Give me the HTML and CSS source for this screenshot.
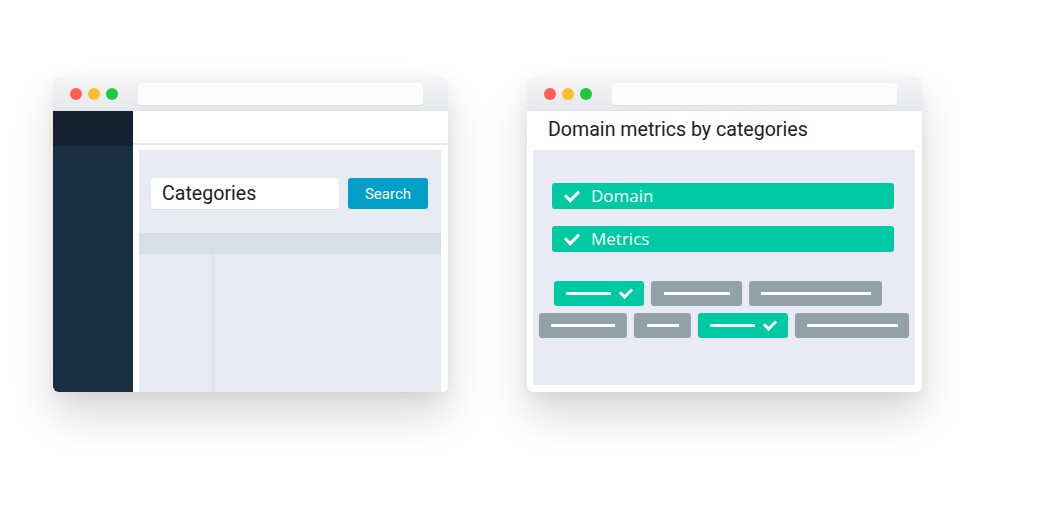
FILE: index.html
```html
<!DOCTYPE html>
<html lang="en">
<head>
    <meta charset="UTF-8">
    <meta name="viewport" content="width=device-width, initial-scale=1.0">
    <title>Categories</title>
    <link rel="stylesheet" href="styles.css">
</head>
<body>
    <div class="stage">
        <!-- Left window: search app -->
        <div class="window">
            <div class="titlebar">
                <div class="dots"><span class="dot red"></span><span class="dot yellow"></span><span class="dot green"></span></div>
                <div class="address"></div>
            </div>
            <div class="app">
                <div class="sidebar">
                    <div class="sidebar-top"></div>
                </div>
                <div class="main">
                    <div class="topbar"></div>
                    <div class="panel">
                        <div class="search-row">
                            <div class="search-input">Categories</div>
                            <button class="search-btn">Search</button>
                        </div>
                        <div class="table-head"></div>
                        <div class="table-body">
                            <div class="table-col"></div>
                        </div>
                    </div>
                </div>
            </div>
        </div>

        <!-- Right window: metrics -->
        <div class="window">
            <div class="titlebar">
                <div class="dots"><span class="dot red"></span><span class="dot yellow"></span><span class="dot green"></span></div>
                <div class="address"></div>
            </div>
            <div class="metrics">
                <h2 class="metrics-title">Domain metrics by categories</h2>
                <div class="metrics-panel">
                    <div class="pill"><span class="check"></span>Domain</div>
                    <div class="pill"><span class="check"></span>Metrics</div>
                    <div class="chips row-one">
                        <div class="chip on" style="width:90px"><span class="bar" style="width:45px"></span><span class="check small"></span></div>
                        <div class="chip" style="width:91px"><span class="bar" style="width:66px"></span></div>
                        <div class="chip" style="width:133px"><span class="bar" style="width:110px"></span></div>
                    </div>
                    <div class="chips row-two">
                        <div class="chip" style="width:88px"><span class="bar" style="width:64px"></span></div>
                        <div class="chip" style="width:57px"><span class="bar" style="width:32px"></span></div>
                        <div class="chip on" style="width:90px"><span class="bar" style="width:45px"></span><span class="check small"></span></div>
                        <div class="chip" style="width:114px"><span class="bar" style="width:91px"></span></div>
                    </div>
                </div>
            </div>
        </div>
    </div>
</body>
</html>
```

FILE: styles.css
```css
html, body {
    height: 100%;
}
body {
    margin: 0;
    background-color: #ffffff;
    font-family: Roboto, "Liberation Sans", sans-serif;
}
.stage {
    display: flex;
    align-items: flex-start;
    gap: 79px;
    min-height: 100%;
    box-sizing: border-box;
    padding: 77px 0 0 53px;
}
.window {
    width: 395px;
    height: 315px;
    flex: none;
    display: flex;
    flex-direction: column;
    background-color: #ffffff;
    border-radius: 6px;
    overflow: hidden;
    box-shadow: 0 24px 44px rgba(0, 0, 0, 0.15), 0 4px 14px rgba(0, 0, 0, 0.06);
}
.titlebar {
    height: 34px;
    flex: none;
    display: flex;
    align-items: center;
    background: linear-gradient(#f4f4f6, #e7e8eb);
    border-bottom: 1px solid #dfe1e6;
    box-sizing: border-box;
}
.dots {
    display: flex;
    gap: 6px;
    padding-left: 17px;
    width: 85px;
    box-sizing: border-box;
}
.dot {
    width: 12px;
    height: 12px;
    border-radius: 50%;
}
.dot.red { background-color: #ff5f57; }
.dot.yellow { background-color: #ffbd2e; }
.dot.green { background-color: #1ec83f; }
.address {
    width: 285px;
    height: 22px;
    background-color: #fcfcfd;
    border-radius: 3px;
    box-shadow: 0 1px 1px rgba(0, 0, 0, 0.05);
}

/* left app */
.app {
    flex: 1;
    display: flex;
}
.sidebar {
    width: 80px;
    background-color: #1b2d42;
}
.sidebar-top {
    height: 35px;
    background-color: #14202e;
}
.main {
    flex: 1;
    display: flex;
    flex-direction: column;
}
.topbar {
    height: 32px;
    border-bottom: 2px solid #e4e6ea;
}
.panel {
    flex: 1;
    margin: 5px 7px 0 6px;
    background-color: #e8ebf3;
    display: flex;
    flex-direction: column;
}
.search-row {
    display: flex;
    gap: 9px;
    padding: 28px 0 0 12px;
    height: 31px;
}
.search-input {
    width: 188px;
    height: 31px;
    box-sizing: border-box;
    background-color: #ffffff;
    border-radius: 3px;
    box-shadow: 0 1px 1px rgba(0, 0, 0, 0.08);
    padding-left: 11px;
    font-size: 19.6px;
    line-height: 31px;
    color: #222222;
}
.search-btn {
    width: 80px;
    height: 31px;
    border: none;
    border-radius: 3px;
    background-color: #00a0c9;
    color: #ffffff;
    font-family: Roboto, "Liberation Sans", sans-serif;
    font-size: 15px;
    padding: 0;
}
.table-head {
    height: 21px;
    margin-top: 24px;
    background-color: #d9dde5;
}
.table-body {
    flex: 1;
    display: flex;
}
.table-col {
    width: 73px;
    border-right: 2px solid #dcdfe4;
}

/* right window */
.metrics {
    flex: 1;
    display: flex;
    flex-direction: column;
}
.metrics-title {
    margin: 0;
    height: 39px;
    padding-left: 21px;
    font-weight: 400;
    font-size: 19.6px;
    line-height: 37px;
    color: #222222;
}
.metrics-panel {
    flex: none;
    height: 235px;
    margin: 0 7px 0 6px;
    background-color: #e8ebf3;
    padding-top: 33px;
    box-sizing: border-box;
}
.pill {
    margin: 0 21px 17px 19px;
    height: 26px;
    border-radius: 3px;
    background-color: #00caa3;
    color: #ffffff;
    font-family: "Open Sans", sans-serif;
    font-size: 17px;
    line-height: 26px;
    display: flex;
    align-items: center;
}
.check {
    width: 11px;
    height: 6px;
    border-left: 3px solid #ffffff;
    border-bottom: 3px solid #ffffff;
    transform: rotate(-45deg);
    margin: -4px 12px 0 13px;
}
.check.small {
    width: 9px;
    height: 5px;
    margin: -4px 0 0 9px;
}
.chips {
    display: flex;
    gap: 7px;
}
.row-one {
    margin: 29px 0 0 21px;
}
.row-two {
    margin: 7px 0 0 6px;
}
.chip {
    height: 25px;
    border-radius: 3px;
    background-color: #93a1a8;
    display: flex;
    align-items: center;
    justify-content: center;
}
.chip.on {
    background-color: #00caa3;
}
.bar {
    height: 3px;
    background-color: #ffffff;
}
```
